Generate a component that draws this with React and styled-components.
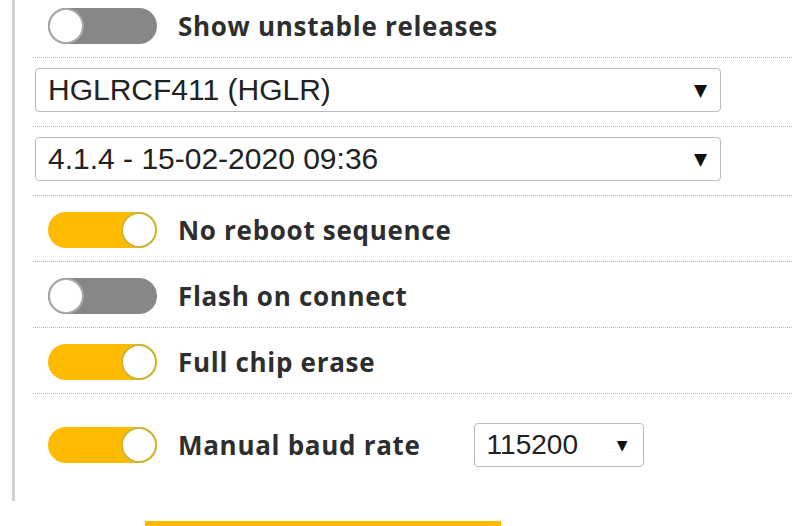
import React from 'react';
import styled, { createGlobalStyle } from 'styled-components';

const GlobalStyle = createGlobalStyle`
  html, body {
    margin: 0;
    padding: 0;
    background: #ffffff;
    overflow: hidden;
  }
  body {
    font-family: "Open Sans", "Liberation Sans", sans-serif;
  }
`;

const Page = styled.div`
  width: 800px;
  height: 526px;
  overflow: hidden;
  background: #fff;
`;

const Panel = styled.div`
  margin: -8px 8px 0 12px;
  padding: 0 0 34px 18px;
  border-left: 3px solid #d2d2d2;
  display: flex;
  flex-direction: column;
`;

const Row = styled.div`
  display: flex;
  align-items: center;
  padding: ${({ $select }) => ($select ? '10px 0 14px 2px' : '16px 0 13px 15px')};
  border-bottom: ${({ $last }) => ($last ? 'none' : '1px dotted #b4b4b4')};
  ${({ $last }) => $last && 'padding-top: 29px; padding-bottom: 0;'}
`;

const Track = styled.div`
  position: relative;
  flex: none;
  width: 109px;
  height: 36px;
  border-radius: 18px;
  background: ${({ $on }) => ($on ? '#ffbb00' : '#878787')};
`;

const Knob = styled.div`
  position: absolute;
  top: 0;
  ${({ $on }) => ($on ? 'right: 0;' : 'left: 0;')}
  width: 32px;
  height: 32px;
  border-radius: 50%;
  background: #fff;
  border: 2px solid ${({ $on }) => ($on ? '#cdb43a' : '#a8a8a8')};
`;

const Label = styled.span`
  margin-left: 21px;
  font-size: 26px;
  font-weight: 700;
  letter-spacing: 0.7px;
  color: #2e2e2e;
  line-height: 34px;
  white-space: nowrap;
`;

const SelectBox = styled.div`
  box-sizing: border-box;
  display: flex;
  align-items: center;
  justify-content: space-between;
  width: ${({ $w }) => $w}px;
  height: 44px;
  padding: 0 ${({ $small }) => ($small ? 15 : 13)}px 0 12px;
  margin-left: ${({ $ml }) => $ml || 0}px;
  border: 1px solid #bdbdbd;
  border-radius: 4px;
  background: #fff;
  font-family: "Liberation Sans", Arial, sans-serif;
  font-size: ${({ $small }) => ($small ? 28 : 30)}px;
  color: #222;
`;

const Arrow = styled.span`
  font-family: "DejaVu Sans", sans-serif;
  font-size: ${({ $small }) => ($small ? 14 : 17)}px;
  color: #111;
`;

const FlashButton = styled.div`
  margin: 20px 0 0 145px;
  width: 356px;
  height: 40px;
  background: #ffbb00;
`;

function Switch({ on, label }) {
  return (
    <>
      <Track $on={on}>
        <Knob $on={on} />
      </Track>
      <Label>{label}</Label>
    </>
  );
}

function Select({ value, width, ml, small }) {
  return (
    <SelectBox $w={width} $ml={ml} $small={small}>
      <span>{value}</span>
      <Arrow $small={small}>▼</Arrow>
    </SelectBox>
  );
}

export default function App() {
  return (
    <Page>
      <GlobalStyle />
      <Panel>
        <Row>
          <Switch label="Show unstable releases" />
        </Row>
        <Row $select>
          <Select value="HGLRCF411 (HGLR)" width={686} />
        </Row>
        <Row $select>
          <Select value="4.1.4 - 15-02-2020 09:36" width={686} />
        </Row>
        <Row>
          <Switch on label="No reboot sequence" />
        </Row>
        <Row>
          <Switch label="Flash on connect" />
        </Row>
        <Row>
          <Switch on label="Full chip erase" />
        </Row>
        <Row $last>
          <Switch on label="Manual baud rate" />
          <Select value="115200" width={170} ml={53} small />
        </Row>
      </Panel>
      <FlashButton />
    </Page>
  );
}
